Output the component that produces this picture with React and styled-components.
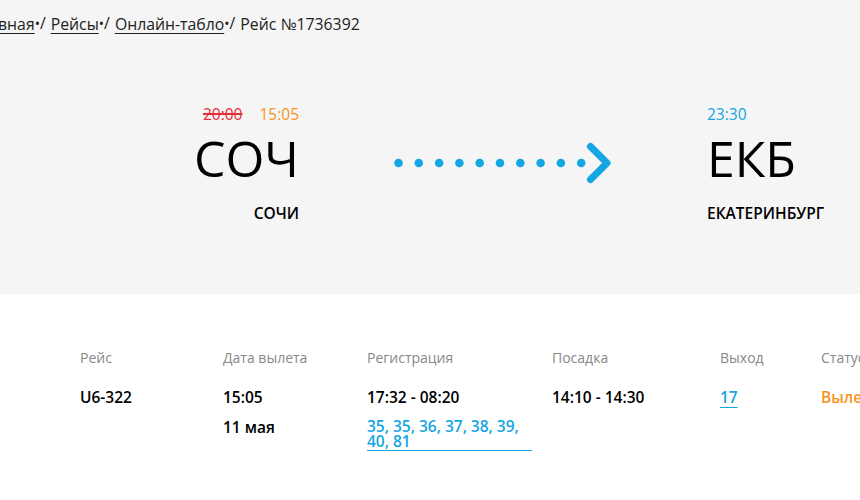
import React from "react";
import styled, { createGlobalStyle } from "styled-components";

const Global = createGlobalStyle`
  html, body { margin: 0; padding: 0; background: #ffffff; }
  body { font-family: "Open Sans", "Noto Sans", sans-serif; color: #111; }
`;

const BLUE = "#14a5e3";
const ORANGE = "#f7941d";
const RED = "#e5303a";

const Page = styled.div`
  width: 860px;
  height: 500px;
  overflow: hidden;
`;

const Hero = styled.section`
  background: #f5f5f5;
  height: 294px;
  box-sizing: border-box;
  padding-top: 13px;
`;

const Crumbs = styled.nav`
  display: flex;
  align-items: center;
  margin-left: -28px;
  font-size: 15.8px;
  line-height: 20px;
  color: #222;
  white-space: nowrap;
`;

const CrumbLink = styled.a`
  color: #222;
  text-decoration: underline;
  text-underline-offset: 3px;
  text-decoration-thickness: 1px;
`;

const Sep = styled.span`
  margin-right: 5px;
  &::before {
    content: "•";
    font-size: 14px;
  }
  &::after {
    content: "/";
  }
`;

const Route = styled.div`
  display: flex;
  align-items: flex-start;
  padding-left: 195px;
  margin-top: 70px;
`;

const Airport = styled.div`
  display: flex;
  flex-direction: column;
  align-items: ${(p) => (p.$align === "right" ? "flex-end" : "flex-start")};
  width: ${(p) => p.$width}px;
`;

const Times = styled.div`
  display: flex;
  gap: 17px;
  font-size: 15.5px;
  line-height: 20px;
`;

const Time = styled.span`
  color: ${(p) => p.$color};
  text-decoration: ${(p) => (p.$struck ? "line-through" : "none")};
  text-decoration-thickness: 1.5px;
`;

const Code = styled.div`
  font-size: 50px;
  line-height: 56px;
  margin-top: 6px;
  color: #000;
`;

const City = styled.div`
  font-size: 15.5px;
  line-height: 20px;
  font-weight: 600;
  margin-top: 17px;
  color: #000;
`;

const ArrowBox = styled.div`
  margin: 38px 95px 0 95px;
  width: 218px;
  height: 42px;
`;

const Table = styled.div`
  display: grid;
  grid-template-columns: 143px 144px 185px 168px 101px 120px;
  padding-left: 80px;
  padding-top: 55px;
`;

const Col = styled.div`
  display: flex;
  flex-direction: column;
`;

const Label = styled.div`
  font-size: 14px;
  line-height: 18px;
  color: #888;
  white-space: nowrap;
`;

const Value = styled.div`
  font-size: 15.5px;
  line-height: 20px;
  font-weight: 600;
  color: ${(p) => p.$color || "#000"};
  margin-top: ${(p) => p.$gap ?? 20}px;
  white-space: nowrap;
`;

const Link = styled.a`
  color: ${BLUE};
  text-decoration: underline;
  text-underline-offset: 4px;
  text-decoration-thickness: 1px;
`;

const Gates = styled.a`
  display: block;
  width: 165px;
  font-size: 15.5px;
  line-height: 15px;
  font-weight: 600;
  color: ${BLUE};
  text-decoration: none;
  border-bottom: 1px solid ${BLUE};
  padding-bottom: 1px;
  margin-top: 12px;
`;

function Arrow() {
  const dots = Array.from({ length: 10 }, (_, i) => 4.5 + i * 20.3);
  return (
    <svg width="218" height="42" viewBox="0 0 218 42">
      {dots.map((x) => (
        <circle key={x} cx={x} cy="21" r="4.3" fill={BLUE} />
      ))}
      <path d="M196.5 4.5 L213 21 L196.5 37.5" fill="none" stroke={BLUE} strokeWidth="7" strokeLinecap="round" strokeLinejoin="round" />
    </svg>
  );
}

export default function App() {
  return (
    <Page>
      <Global />
      <Hero>
        <Crumbs>
          <CrumbLink>Главная</CrumbLink>
          <Sep />
          <CrumbLink>Рейсы</CrumbLink>
          <Sep />
          <CrumbLink>Онлайн-табло</CrumbLink>
          <Sep />
          <span>Рейс №1736392</span>
        </Crumbs>
        <Route>
          <Airport $align="right" $width={104}>
            <Times>
              <Time $color={RED} $struck>20:00</Time>
              <Time $color={ORANGE}>15:05</Time>
            </Times>
            <Code>СОЧ</Code>
            <City>СОЧИ</City>
          </Airport>
          <ArrowBox>
            <Arrow />
          </ArrowBox>
          <Airport $align="left" $width={150}>
            <Times>
              <Time $color={BLUE}>23:30</Time>
            </Times>
            <Code>ЕКБ</Code>
            <City>ЕКАТЕРИНБУРГ</City>
          </Airport>
        </Route>
      </Hero>
      <Table>
        <Col>
          <Label>Рейс</Label>
          <Value>U6-322</Value>
        </Col>
        <Col>
          <Label>Дата вылета</Label>
          <Value>15:05</Value>
          <Value $gap={10}>11 мая</Value>
        </Col>
        <Col>
          <Label>Регистрация</Label>
          <Value>17:32 - 08:20</Value>
          <Gates>35, 35, 36, 37, 38, 39, 40, 81</Gates>
        </Col>
        <Col>
          <Label>Посадка</Label>
          <Value>14:10 - 14:30</Value>
        </Col>
        <Col>
          <Label>Выход</Label>
          <Value>
            <Link>17</Link>
          </Value>
        </Col>
        <Col>
          <Label>Статус</Label>
          <Value $color={ORANGE}>Вылетел</Value>
        </Col>
      </Table>
    </Page>
  );
}
